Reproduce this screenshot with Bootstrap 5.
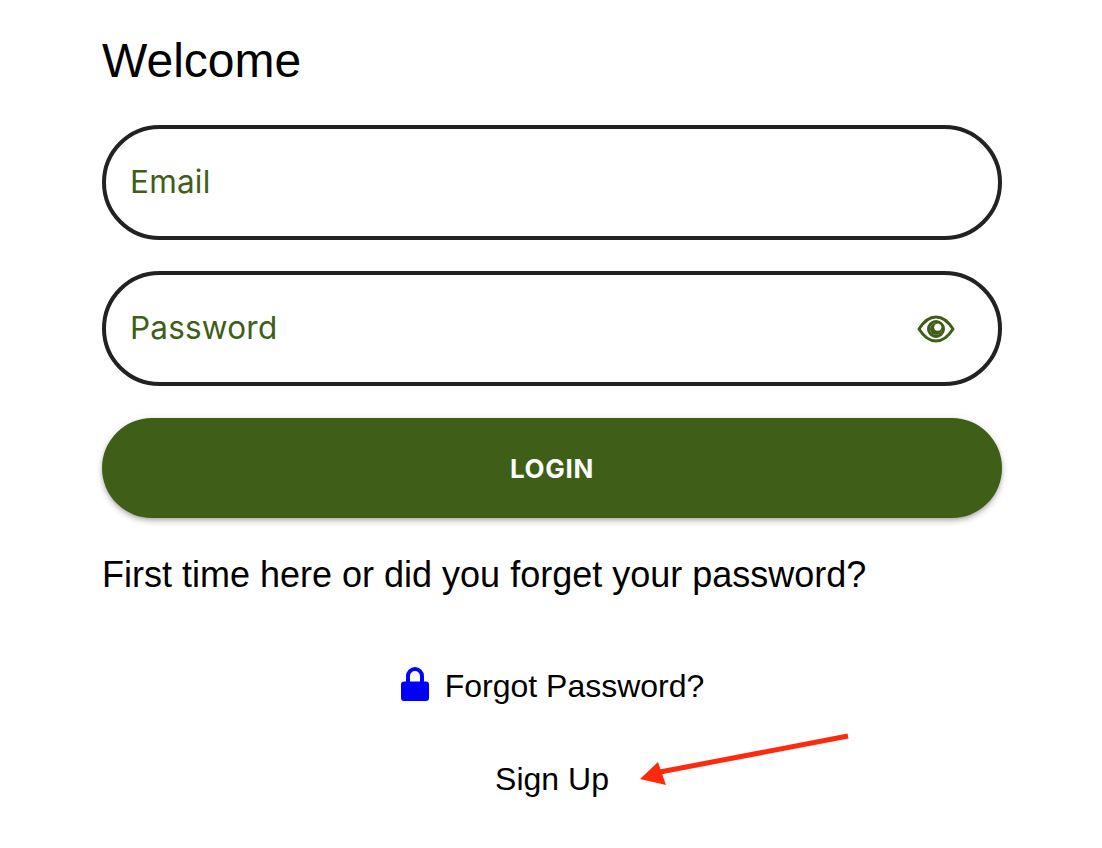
<!DOCTYPE html>
<html lang="en">
<head>
<meta charset="utf-8">
<title>Welcome</title>
<link rel="stylesheet" href="https://cdn.jsdelivr.net/npm/bootstrap@5.3.0/dist/css/bootstrap.min.css">
<style>
html, body { height: 848px; overflow: hidden; background: #fff; }
body { position: relative; font-family: "Liberation Sans", Arial, sans-serif; color: #000; }
.login-wrap { width: 900px; margin-left: 102px; padding-top: 33px; }
.welcome-title { font-family: "Liberation Sans", Arial, sans-serif; font-size: 48px; line-height: 56px; font-weight: 400; margin: 0 0 36px; }
.pill-field { height: 115px; border: 4px solid #222; border-radius: 58px; padding: 0 43px 0 24px; margin-bottom: 31px; }
.pill-label { font-family: "Inter", sans-serif; font-size: 31.5px; letter-spacing: .2px; line-height: 1; color: #3f5e17; margin: 0 0 2px; }
.login-btn { height: 100px; border-radius: 50px; border: 0; padding-top: 6px; background: #3f5e17; color: #fff; font-family: "Inter", sans-serif; font-weight: 700; font-size: 26px; letter-spacing: .7px; box-shadow: 0 2px 4px -1px rgba(0,0,0,.25), 0 4px 6px 0 rgba(0,0,0,.12), 0 1px 10px 0 rgba(0,0,0,.08); margin-top: 32px; }
.login-btn:hover { background: #3f5e17; color: #fff; }
.help-text { font-size: 36px; line-height: 42px; margin: 36px 0 0; }
.link-line { font-size: 32px; line-height: 38px; color: #000; text-decoration: none; }
.forgot-row { margin-top: 71px; gap: 15px; }
.lock-glyph { margin-bottom: 4px; }
.signup-row { margin-top: 55px; }
.note-arrow { position: absolute; left: 636px; top: 730px; }
</style>
</head>
<body>
<main class="login-wrap">
  <h1 class="welcome-title">Welcome</h1>
  <div class="pill-field d-flex align-items-center"><label class="pill-label">Email</label></div>
  <div class="pill-field d-flex align-items-center justify-content-between mb-0">
    <label class="pill-label">Password</label>
    <svg width="38" height="28" viewBox="0 0 38 28" fill="none" aria-hidden="true">
      <path d="M2 14C7 6 13 2 19 2s12 4 17 12c-5 8-11 12-17 12S7 22 2 14Z" stroke="#3f5e17" stroke-width="3" stroke-linejoin="round"/>
      <circle cx="19" cy="14" r="7.5" stroke="#3f5e17" stroke-width="3"/>
      <circle cx="19" cy="14" r="6" fill="#3f5e17"/>
      <circle cx="20.7" cy="12.3" r="3.5" fill="#fff"/>
    </svg>
  </div>
  <button type="button" class="btn login-btn w-100 d-block">LOGIN</button>
  <p class="help-text">First time here or did you forget your password?</p>
  <div class="d-flex justify-content-center align-items-center forgot-row">
    <svg class="lock-glyph" width="30" height="34" viewBox="0 0 30 34" aria-hidden="true">
      <path d="M8 17V9a7 7 0 0 1 14 0v8" fill="none" stroke="#0000ff" stroke-width="4"/>
      <rect x="1" y="14.5" width="28" height="19.5" rx="3" fill="#0000ff"/>
    </svg>
    <a class="link-line" href="#">Forgot Password?</a>
  </div>
  <div class="d-flex justify-content-center signup-row">
    <a class="link-line" href="#">Sign Up</a>
  </div>
</main>
<svg class="note-arrow" width="216" height="60" viewBox="0 0 216 60" aria-hidden="true">
  <path d="M212 6 24 42" stroke="#ff2a0d" stroke-width="5" fill="none"/>
  <path d="M4 49 22 32 30 55Z" fill="#ff2a0d"/>
</svg>
</body>
</html>
